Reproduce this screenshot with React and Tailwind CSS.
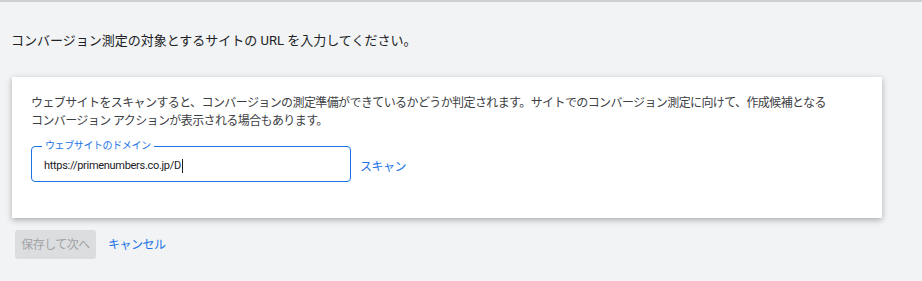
import React from 'react';

const font = { fontFamily: '"Roboto", "Noto Sans CJK JP", sans-serif' };

export default function App() {
  return (
    <div className="min-h-[281px] w-full bg-[#f1f3f4] border-t-2 border-[#cfd0d2]" style={font}>
      <div className="pl-[11px] pt-[30px] text-[13px] leading-[18px] text-[#202124]">
        コンバージョン測定の対象とするサイトの URL を入力してください。
      </div>

      {/* card */}
      <div className="ml-[12px] mt-[27px] w-[870px] h-[141px] bg-white shadow-[0_2px_6px_rgba(0,0,0,0.3)] pl-[19px] pt-[17px]">
        <p className="text-[12px] leading-[18px] text-[#3c4043] tracking-[-0.6px]">
          ウェブサイトをスキャンすると、コンバージョンの測定準備ができているかどうか判定されます。サイトでのコンバージョン測定に向けて、作成候補となる
          <br />
          コンバージョン アクションが表示される場合もあります。
        </p>

        <div className="mt-[16px] flex items-center gap-[9px]">
          <div className="relative w-[320px] h-[36px] rounded-[4px] border border-[#1a73e8] flex items-center pl-[12px] pt-[4px]">
            <span className="absolute left-[10px] -top-[8px] bg-white px-[3px] text-[10px] leading-[14px] text-[#1a73e8] tracking-[-0.4px]">
              ウェブサイトのドメイン
            </span>
            <span className="text-[11px] text-[#202124] tracking-[-0.3px]">https://primenumbers.co.jp/D</span>
            <span className="ml-[1px] w-px h-[14px] bg-[#202124]" />
          </div>
          <button className="mt-[5px] text-[12px] text-[#1a73e8] tracking-[-0.5px]">スキャン</button>
        </div>
      </div>

      {/* actions */}
      <div className="mt-[12px] ml-[15px] flex items-center gap-[12px]">
        <button className="h-[29px] w-[81px] rounded-[3px] bg-[#dcdddf] text-[12px] text-[#a1a3a6] tracking-[-0.5px]">
          保存して次へ
        </button>
        <button className="text-[12px] text-[#1a73e8] tracking-[-0.5px]">キャンセル</button>
      </div>
    </div>
  );
}
